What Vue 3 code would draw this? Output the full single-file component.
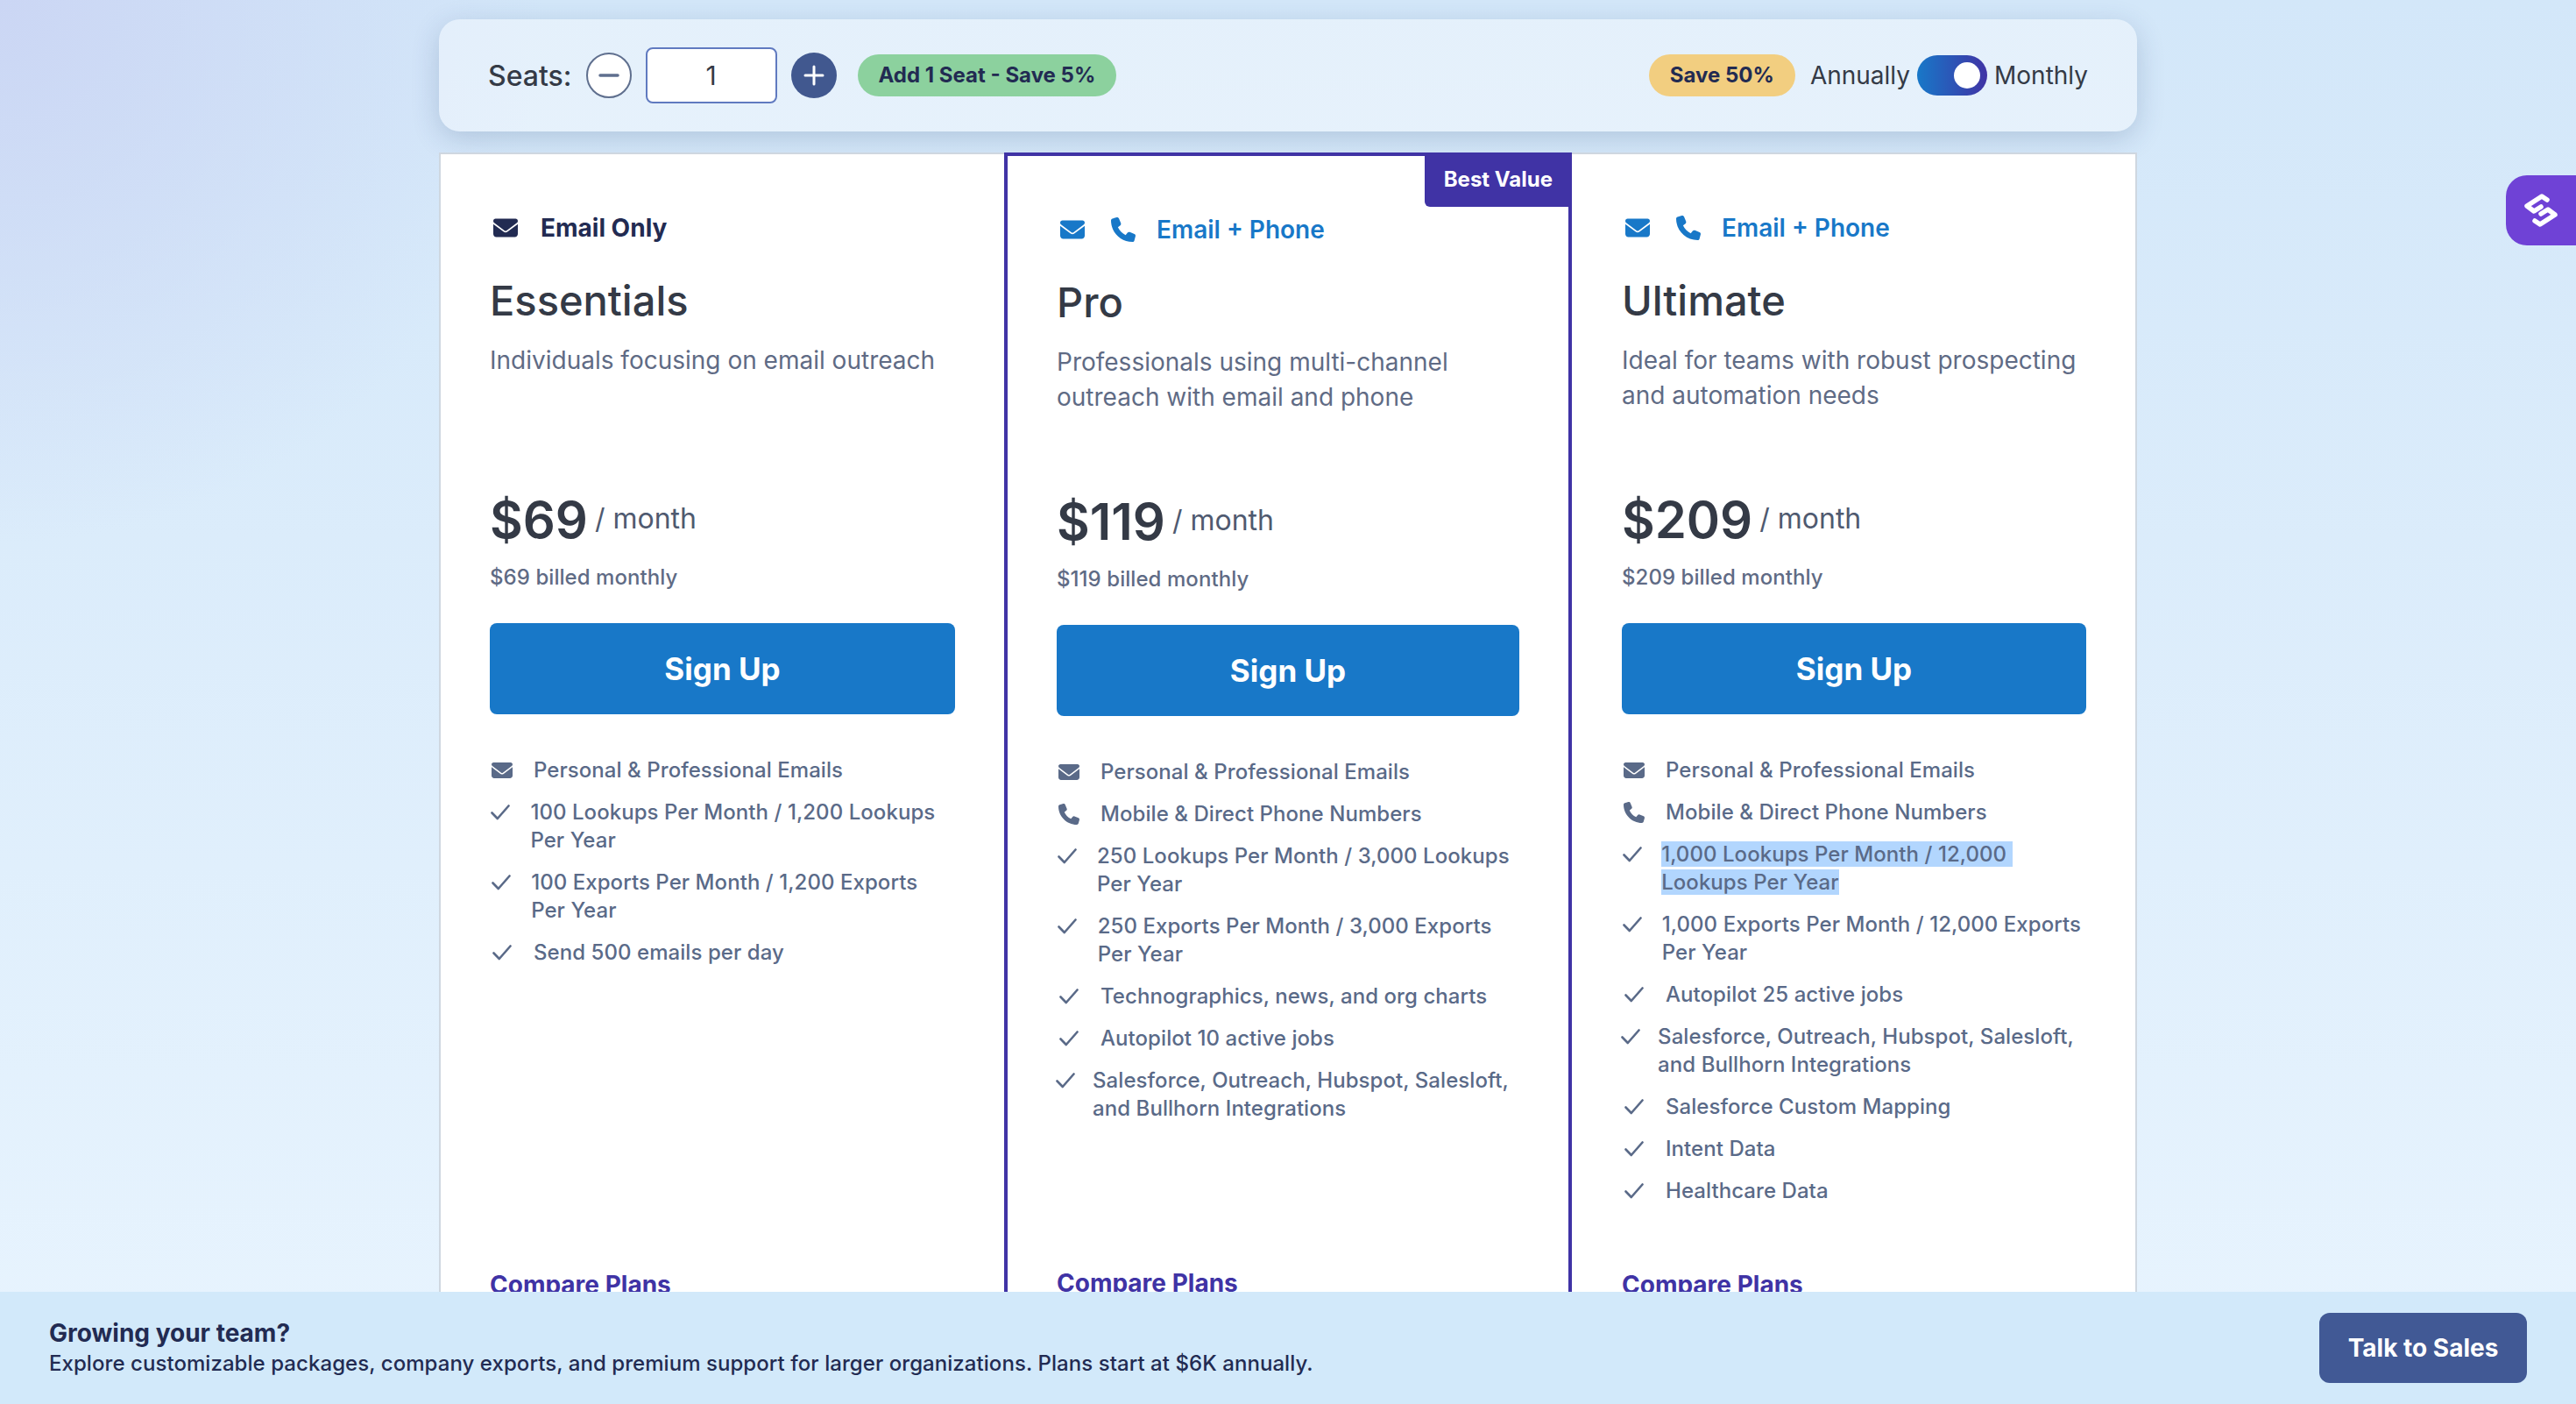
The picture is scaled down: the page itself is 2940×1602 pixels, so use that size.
<script setup>
import { ref } from 'vue'

const seats = ref(1)

const mailPath = 'M48 64C21.5 64 0 85.5 0 112c0 15.1 7.1 29.3 19.2 38.4L236.8 313.6c11.4 8.5 27 8.5 38.4 0L492.8 150.4c12.1-9.1 19.2-23.3 19.2-38.4c0-26.5-21.5-48-48-48H48zM0 176V384c0 35.3 28.7 64 64 64H448c35.3 0 64-28.7 64-64V176L294.4 339.2c-22.8 17.1-54 17.1-76.8 0L0 176z'
const phonePath = 'M164.9 24.6c-7.7-18.6-28-28.5-47.4-23.2l-88 24C12.1 30.2 0 46 0 64C0 311.4 200.6 512 448 512c18 0 33.8-12.1 38.6-29.5l24-88c5.3-19.4-4.6-39.7-23.2-47.4l-96-40c-16.3-6.8-35.2-2.1-46.3 11.6L304.7 368C234.3 334.7 177.3 277.7 144 207.3L193.3 167c13.7-11.2 18.4-30 11.6-46.3l-40-96z'

const integrations = 'Salesforce, Outreach, Hubspot, Salesloft, and Bullhorn Integrations'

const plans = [
  {
    id: 'essentials',
    channel: 'Email Only',
    channelIcons: ['mail'],
    name: 'Essentials',
    desc: 'Individuals focusing on email outreach',
    price: '$69',
    billed: '$69 billed monthly',
    features: [
      { icon: 'mail', text: 'Personal & Professional Emails' },
      { icon: 'check', text: '100 Lookups Per Month / 1,200 Lookups Per Year' },
      { icon: 'check', text: '100 Exports Per Month / 1,200 Exports Per Year' },
      { icon: 'check', text: 'Send 500 emails per day' },
    ],
  },
  {
    id: 'pro',
    channel: 'Email + Phone',
    channelIcons: ['mail', 'phone'],
    name: 'Pro',
    desc: 'Professionals using multi-channel outreach with email and phone',
    price: '$119',
    billed: '$119 billed monthly',
    features: [
      { icon: 'mail', text: 'Personal & Professional Emails' },
      { icon: 'phone', text: 'Mobile & Direct Phone Numbers' },
      { icon: 'check', text: '250 Lookups Per Month / 3,000 Lookups Per Year' },
      { icon: 'check', text: '250 Exports Per Month / 3,000 Exports Per Year' },
      { icon: 'check', text: 'Technographics, news, and org charts' },
      { icon: 'check', text: 'Autopilot 10 active jobs' },
      { icon: 'check', text: integrations },
    ],
  },
  {
    id: 'ultimate',
    channel: 'Email + Phone',
    channelIcons: ['mail', 'phone'],
    name: 'Ultimate',
    desc: 'Ideal for teams with robust prospecting and automation needs',
    price: '$209',
    billed: '$209 billed monthly',
    features: [
      { icon: 'mail', text: 'Personal & Professional Emails' },
      { icon: 'phone', text: 'Mobile & Direct Phone Numbers' },
      // nbsp + zero width space so the selection colour runs past the wrap
      { icon: 'check', text: '1,000 Lookups Per Month / 12,000\u00a0\u200bLookups Per Year', selected: true },
      { icon: 'check', text: '1,000 Exports Per Month / 12,000 Exports Per Year' },
      { icon: 'check', text: 'Autopilot 25 active jobs' },
      { icon: 'check', text: integrations },
      { icon: 'check', text: 'Salesforce Custom Mapping' },
      { icon: 'check', text: 'Intent Data' },
      { icon: 'check', text: 'Healthcare Data' },
    ],
  },
]
</script>

<template>
  <div class="page">
    <div class="wrap">
      <div class="seatbar">
        <div class="seat-left">
          <span class="seat-label">Seats:</span>
          <button class="round minus">
            <svg width="24" height="24" viewBox="0 0 24 24"><path d="M2 12h20" stroke="#5f6f8e" stroke-width="3.500" stroke-linecap="round" /></svg>
          </button>
          <div class="seat-input">{{ seats }}</div>
          <button class="round plus">
            <svg width="24" height="24" viewBox="0 0 24 24"><path d="M2 12h20M12 2v20" stroke="#fff" stroke-width="3" stroke-linecap="round" /></svg>
          </button>
          <span class="pill green">Add 1 Seat - Save 5%</span>
        </div>
        <div class="seat-right">
          <span class="pill yellow">Save 50%</span>
          <span class="period">Annually</span>
          <span class="toggle"><span class="knob"></span></span>
          <span class="period">Monthly</span>
        </div>
      </div>

      <div class="plans">
        <div v-for="plan in plans" :key="plan.id" class="plan" :class="plan.id">
          <div v-if="plan.id === 'pro'" class="best">Best Value</div>
          <div class="channel">
            <svg v-for="ic in plan.channelIcons" :key="ic" class="channel-icon" viewBox="0 0 512 512" fill="currentColor">
              <path :d="ic === 'mail' ? mailPath : phonePath" />
            </svg>
            <span class="channel-name">{{ plan.channel }}</span>
          </div>
          <h2 class="plan-name">{{ plan.name }}</h2>
          <p class="plan-desc">{{ plan.desc }}</p>
          <div class="price-row">
            <span class="price">{{ plan.price }}</span>
            <span class="per">/ month</span>
          </div>
          <div class="billed">{{ plan.billed }}</div>
          <button class="signup">Sign Up</button>
          <ul class="features">
            <li v-for="f in plan.features" :key="f.text" class="feature">
              <span class="feature-icon">
                <svg v-if="f.icon === 'check'" width="22" height="18" viewBox="0 0 22 18" fill="none">
                  <path d="M1.500 9.500L7.800 16L20.500 1.500" stroke="currentColor" stroke-width="2.600" stroke-linecap="round" stroke-linejoin="round" />
                </svg>
                <svg v-else width="24" height="24" viewBox="0 0 512 512" fill="currentColor">
                  <path :d="f.icon === 'mail' ? mailPath : phonePath" />
                </svg>
              </span>
              <span class="feature-text"><span :class="{ selected: f.selected }">{{ f.text }}</span></span>
            </li>
          </ul>
          <a class="compare">Compare Plans</a>
        </div>
      </div>
    </div>

    <div class="side-tab">
      <svg width="40" height="40" viewBox="0 0 40 40" fill="none" stroke="#fff" stroke-width="5.500" stroke-linejoin="round" stroke-linecap="round">
        <path d="M27 8l-6-4L4 15l8 6 8-5" />
        <path d="M13 32l6 4 17-11-8-6-8 5" />
      </svg>
    </div>

    <div class="banner">
      <div>
        <div class="banner-title">Growing your team?</div>
        <div class="banner-sub">Explore customizable packages, company exports, and premium support for larger organizations. Plans start at $6K annually.</div>
      </div>
      <button class="talk">Talk to Sales</button>
    </div>
  </div>
</template>

<style>
html, body {
  margin: 0;
  overflow: hidden;
}
</style>

<style scoped>
.page {
  position: relative;
  height: 1602px;
  overflow: hidden;
  font-family: Inter, "Liberation Sans", sans-serif;
  background:
    radial-gradient(circle at 0 0, #cbd6f4 0, rgba(203, 214, 244, 0) 620px),
    linear-gradient(180deg, #d3e7f9 0%, #e8f4fe 100%);
}

button {
  font-family: inherit;
  border: none;
  cursor: pointer;
}

.wrap {
  width: 1938px;
  margin: 0 auto;
  padding-top: 22px;
}

.seatbar {
  height: 128px;
  box-sizing: border-box;
  padding: 0 56px;
  display: flex;
  align-items: center;
  justify-content: space-between;
  background: rgba(255, 255, 255, 0.4);
  border-radius: 24px;
  box-shadow: 0 8px 32px rgba(30, 60, 110, 0.2);
}

.seat-left,
.seat-right {
  display: flex;
  align-items: center;
}

.seat-label {
  font-size: 32px;
  font-weight: 500;
  color: #343a46;
  margin-right: 16px;
}

.round {
  width: 52px;
  height: 52px;
  border-radius: 50%;
  padding: 0;
  display: flex;
  align-items: center;
  justify-content: center;
  flex-shrink: 0;
}

.minus {
  background: #fff;
  border: 2px solid #5f6f8e;
}

.plus {
  background: #41588f;
}

.seat-input {
  width: 150px;
  height: 64px;
  box-sizing: border-box;
  margin: 0 16px;
  border: 2px solid #607ac0;
  border-radius: 8px;
  background: #fff;
  color: #343a46;
  font-size: 30px;
  line-height: 60px;
  text-align: center;
}

.pill {
  height: 48px;
  line-height: 48px;
  padding: 0 24px;
  border-radius: 24px;
  font-size: 24px;
  font-weight: 700;
  color: #222b52;
  white-space: nowrap;
}

.green {
  background: #8cd19e;
  margin-left: 24px;
}

.yellow {
  background: #f2ce80;
  margin-right: 17px;
}

.period {
  font-size: 28px;
  color: #343a46;
}

.toggle {
  width: 80px;
  height: 46px;
  margin: 0 8px;
  border-radius: 23px;
  background: linear-gradient(90deg, #1878c8, #4033a5);
  display: flex;
  align-items: center;
  justify-content: flex-end;
  padding-right: 8px;
  box-sizing: border-box;
}

.knob {
  width: 30px;
  height: 30px;
  border-radius: 50%;
  background: #fff;
}

.plans {
  margin-top: 24px;
  display: grid;
  grid-template-columns: 645px 648px 645px;
}

.plan {
  position: relative;
  display: flex;
  flex-direction: column;
  box-sizing: border-box;
  padding: 66px 56px 200px;
  background: #fff;
  border: 2px solid #cfd7e0;
}

.plan.essentials {
  border-right: none;
}

.plan.ultimate {
  border-left: none;
  padding-left: 57px;
}

.plan.pro {
  border: 4px solid #4033a5;
}

.best {
  position: absolute;
  top: -4px;
  right: -4px;
  height: 62px;
  line-height: 62px;
  padding: 0 22px;
  background: #4033a5;
  color: #fff;
  font-size: 24px;
  font-weight: 700;
  border-bottom-left-radius: 6px;
}

.channel {
  display: flex;
  align-items: center;
  height: 36px;
  color: #1878c8;
}

.essentials .channel {
  color: #222b52;
}

.channel-icon {
  width: 28px;
  height: 28px;
  margin-left: 4px;
  margin-right: 30px;
}

.channel-icon + .channel-icon {
  margin-left: 0;
  margin-right: 24px;
}

.essentials .channel-icon {
  margin-right: 26px;
}

.channel-name {
  font-size: 28px;
  font-weight: 600;
}

.essentials .channel-name {
  font-weight: 700;
}

.plan-name {
  margin: 33px 0 0;
  font-size: 47px;
  line-height: 64px;
  font-weight: 500;
  color: #343a46;
}

.plan-desc {
  margin: 16px 0 0;
  min-height: 80px;
  font-size: 28px;
  line-height: 40px;
  color: #5f6b85;
}

.price-row {
  margin-top: 84px;
  display: flex;
  align-items: center;
}

.price {
  font-size: 58px;
  line-height: 76px;
  font-weight: 600;
  color: #343a46;
}

.per {
  margin-left: 8px;
  margin-bottom: 3px;
  font-size: 32px;
  color: #4f5a70;
}

.billed {
  margin-top: 10px;
  font-size: 24px;
  line-height: 36px;
  font-weight: 500;
  letter-spacing: 0.06px;
  color: #5f6b85;
}

.signup {
  margin-top: 34px;
  height: 104px;
  border-radius: 8px;
  background: #1878c8;
  color: #fff;
  font-size: 35px;
  font-weight: 700;
}

.features {
  list-style: none;
  margin: 48px 0 0;
  padding: 0 4px 0 2px;
  display: flex;
  flex-direction: column;
  gap: 16px;
  flex: 1;
}

.feature {
  display: flex;
  gap: 24px;
  font-size: 24px;
  line-height: 32px;
  font-weight: 500;
  letter-spacing: 0.06px;
  color: #5a6a88;
}

.feature-icon {
  flex: 0 1 24px;
  min-width: 0;
  height: 32px;
  display: flex;
  align-items: center;
  justify-content: center;
}

.feature-icon svg {
  flex-shrink: 0;
}

.feature-text {
  flex: 0 1 auto;
}

.selected {
  background: #b2d6fe;
}

.compare {
  margin-top: 73px;
  font-size: 28px;
  line-height: 36px;
  font-weight: 700;
  color: #4033a5;
}

.side-tab {
  position: absolute;
  top: 200px;
  right: 0;
  width: 80px;
  height: 80px;
  box-sizing: border-box;
  padding-left: 20px;
  display: flex;
  align-items: center;
  background: #6f42d6;
  border-radius: 24px 0 0 24px;
}

.banner {
  position: absolute;
  left: 0;
  right: 0;
  bottom: 0;
  height: 128px;
  box-sizing: border-box;
  padding: 0 56px;
  display: flex;
  align-items: center;
  justify-content: space-between;
  background: #d2e9fa;
}

.banner-title {
  font-size: 28px;
  line-height: 36px;
  font-weight: 700;
  color: #222b52;
}

.banner-sub {
  font-size: 24px;
  line-height: 34px;
  font-weight: 500;
  letter-spacing: 0.06px;
  color: #222b52;
}

.talk {
  width: 237px;
  height: 80px;
  border-radius: 12px;
  background: #415995;
  color: #fff;
  font-size: 28px;
  font-weight: 700;
}
</style>
